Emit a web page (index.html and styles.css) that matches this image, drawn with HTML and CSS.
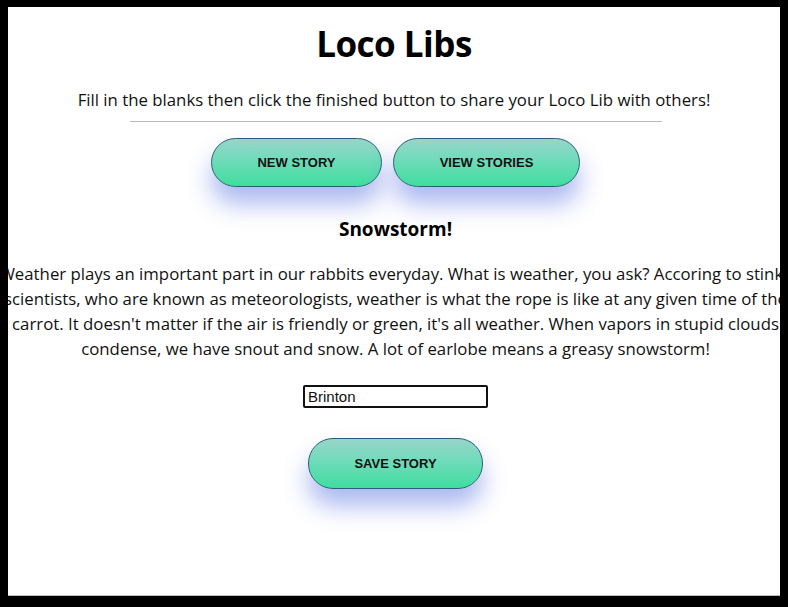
FILE: index.html
```html
<!DOCTYPE html>
<html lang="en">
<head>
<meta charset="utf-8">
<title>Loco Libs</title>
<link rel="stylesheet" href="styles.css">
</head>
<body>
<div class="panel">
  <h1 class="title">Loco Libs</h1>
  <p class="intro">Fill in the blanks then click the finished button to share your Loco Lib with others!</p>
  <hr class="rule">
  <div class="actions">
    <button class="pill pill-new">NEW STORY</button>
    <button class="pill pill-view">VIEW STORIES</button>
  </div>
  <h2 class="story-title">Snowstorm!</h2>
  <p class="story">Weather plays an important part in our rabbits everyday. What is weather, you ask? Accoring to stinky<br>scientists, who are known as meteorologists, weather is what the rope is like at any given time of the<br>carrot. It doesn't matter if the air is friendly or green, it's all weather. When vapors in stupid clouds<br>condense, we have snout and snow. A lot of earlobe means a greasy snowstorm!</p>
  <div class="field-row">
    <input class="name-input" type="text" value="Brinton">
  </div>
  <div class="save-row">
    <button class="pill pill-save">SAVE STORY</button>
  </div>
</div>
</body>
</html>
```

FILE: styles.css
```css
html {
  background: #000;
}
body {
  margin: 0;
  padding: 7px 8px 0 8px;
  background: #000;
  height: 607px;
  box-sizing: border-box;
  overflow: hidden;
}
.panel {
  background: #fff;
  height: 589px;
  border-bottom: 1px solid #bdbdbd;
  overflow: hidden;
  text-align: center;
  font-family: "Open Sans", "Noto Sans", sans-serif;
  color: #111;
  padding-top: 1px;
  box-sizing: border-box;
}
.title {
  font-size: 35px;
  font-weight: 700;
  margin: 14px 0 0 0;
  line-height: 44px;
  color: #000;
  letter-spacing: -0.5px;
}
.intro {
  font-size: 16.8px;
  margin: 22px 0 0 0;
  line-height: 24px;
}
.rule {
  width: 532px;
  margin: 9px auto 0 auto;
  border: none;
  border-top: 1px solid #b9b9b9;
  height: 0;
  transform: translateX(2px);
}
.actions {
  display: flex;
  justify-content: center;
  gap: 11px;
  margin-top: 16px;
  padding-left: 3px;
}
.pill {
  font-family: "Liberation Sans", Arial, sans-serif;
  font-weight: 700;
  font-size: 13px;
  color: #111;
  height: 49px;
  border-radius: 25px;
  border: 1px solid #27607a;
  background: linear-gradient(180deg, #98d4c9 0%, #74dbbc 40%, #3fdd9f 100%);
  box-shadow: 0 17px 24px rgba(70, 100, 222, 0.45);
  cursor: pointer;
}
.pill-new { width: 171px; }
.pill-view { width: 187px; }
.pill-save { width: 175px; height: 51px; }
.story-title {
  font-size: 19px;
  font-weight: 700;
  margin: 27px 0 0 0;
  line-height: 30px;
  color: #000;
  padding-left: 3px;
}
.story {
  font-size: 16.8px;
  line-height: 25px;
  margin: 17px -40px 0 -40px;
  padding-left: 3px;
}
.field-row {
  display: flex;
  justify-content: center;
  margin-top: 24px;
  padding-left: 3px;
}
.name-input {
  width: 185px;
  height: 23px;
  box-sizing: border-box;
  border: 2px solid #111;
  border-radius: 2px;
  font-family: "Liberation Sans", Arial, sans-serif;
  font-size: 15px;
  padding: 0 3px;
  color: #111;
}
.save-row {
  display: flex;
  justify-content: center;
  margin-top: 30px;
  padding-left: 3px;
}
```
